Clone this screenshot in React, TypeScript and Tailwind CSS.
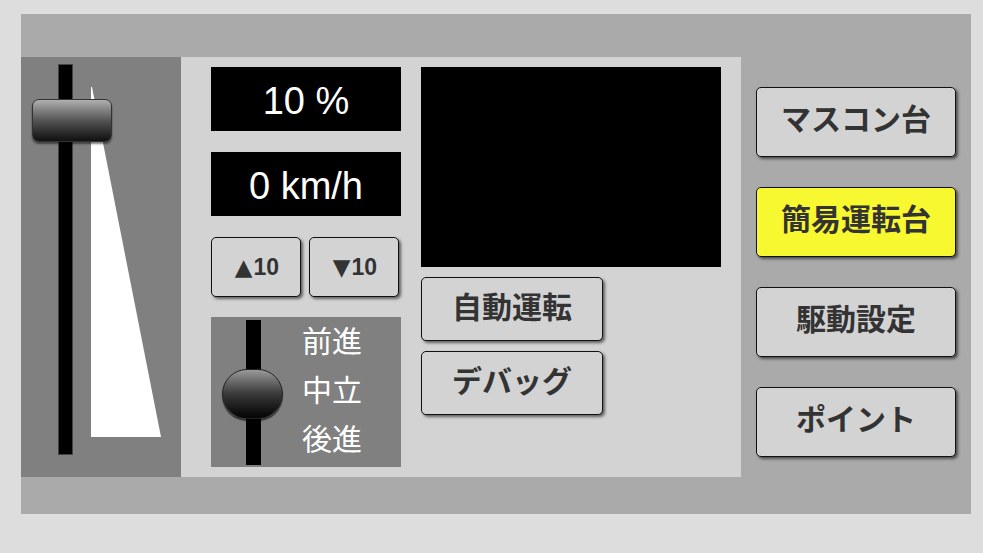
import React from 'react';

const jp = { fontFamily: '"Noto Sans CJK JP", "Noto Sans", sans-serif' };
const latin = { fontFamily: '"Liberation Sans", Arial, sans-serif' };
const sym = { fontFamily: '"DejaVu Sans", sans-serif' };

const btnBase =
  'flex items-center justify-center rounded-[5px] border border-[#111] shadow-[2px_2px_3px_rgba(0,0,0,0.55)] font-bold text-[#333]';

const MenuButton: React.FC<{ label: string; active?: boolean }> = ({ label, active }) => (
  <div
    className={`${btnBase} w-[200px] h-[70px] text-[30px] pb-[9px] ${active ? 'bg-[#f8f830]' : 'bg-[#d3d3d3]'}`}
    style={jp}
  >
    {label}
  </div>
);

const ThrottleSlider: React.FC = () => (
  <div className="relative w-[160px] h-[420px] bg-[#808080] flex items-start pl-[37px] pt-[7px]">
    <div className="w-[15px] h-[391px] bg-black border border-[#444]" />
    <svg width="70" height="350" viewBox="0 0 70 350" className="ml-[18px] mt-[23px]">
      <polygon points="0,0 1,0 70,350 0,350" fill="#ffffff" />
    </svg>
    <div className="absolute left-[11px] top-[42px] w-[80px] h-[43px] rounded-[7px] border border-[#333] bg-gradient-to-b from-[#b0b0b0] via-[#555] to-[#111] shadow-[0_2px_2px_rgba(0,0,0,0.5)]" />
  </div>
);

const Reverser: React.FC = () => (
  <div className="relative w-[190px] h-[150px] bg-[#808080] flex items-start pl-[35px] pt-[3px]">
    <div className="w-[15px] h-[145px] bg-black" />
    <div className="ml-[41px] flex flex-col text-white text-[30px] leading-[49px] mt-[-5px]" style={jp}>
      <span>前進</span>
      <span>中立</span>
      <span>後進</span>
    </div>
    <div className="absolute left-[11px] top-[52px] w-[61px] h-[50px] rounded-full border border-[#222] bg-gradient-to-b from-[#9a9a9a] via-[#3a3a3a] to-[#050505] shadow-[0_2px_1px_rgba(0,0,0,0.6)]" />
  </div>
);

const StepButton: React.FC<{ arrow: string }> = ({ arrow }) => (
  <div className={`${btnBase} w-[90px] h-[60px] bg-[#d3d3d3] text-[23px] pl-[2px]`} style={latin}>
    <span style={sym} className="text-[23px] font-normal text-[#333] mr-[1px]">
      {arrow}
    </span>
    <span>10</span>
  </div>
);

export default function App() {
  return (
    <div className="w-[983px] h-[553px] bg-[#dddddd] pt-[14px] pl-[21px]">
      <div className="w-[950px] h-[500px] bg-[#aaaaaa] pt-[43px]">
        <div className="flex">
          <ThrottleSlider />

          <div className="w-[560px] h-[420px] bg-[#d3d3d3] flex gap-[20px] pl-[30px] pt-[10px]">
            <div className="flex flex-col w-[190px]">
              <div className="h-[64px] bg-black flex items-center justify-center text-white text-[38px] pt-[4px]" style={latin}>
                10 %
              </div>
              <div className="h-[64px] mt-[21px] bg-black flex items-center justify-center text-white text-[38px] pt-[4px]" style={latin}>
                0 km/h
              </div>
              <div className="flex gap-[8px] mt-[21px]">
                <StepButton arrow="▲" />
                <StepButton arrow="▼" />
              </div>
              <div className="mt-[20px]">
                <Reverser />
              </div>
            </div>

            <div className="flex flex-col">
              <div className="w-[300px] h-[200px] bg-black" />
              <div className={`${btnBase} w-[182px] h-[64px] mt-[10px] bg-[#d3d3d3] text-[30px] pb-[8px]`} style={jp}>
                自動運転
              </div>
              <div className={`${btnBase} w-[182px] h-[64px] mt-[10px] bg-[#d3d3d3] text-[30px] pb-[8px]`} style={jp}>
                デバッグ
              </div>
            </div>
          </div>

          <div className="w-[230px] flex flex-col items-center gap-[30px] pt-[30px]">
            <MenuButton label="マスコン台" />
            <MenuButton label="簡易運転台" active />
            <MenuButton label="駆動設定" />
            <MenuButton label="ポイント" />
          </div>
        </div>
      </div>
    </div>
  );
}
